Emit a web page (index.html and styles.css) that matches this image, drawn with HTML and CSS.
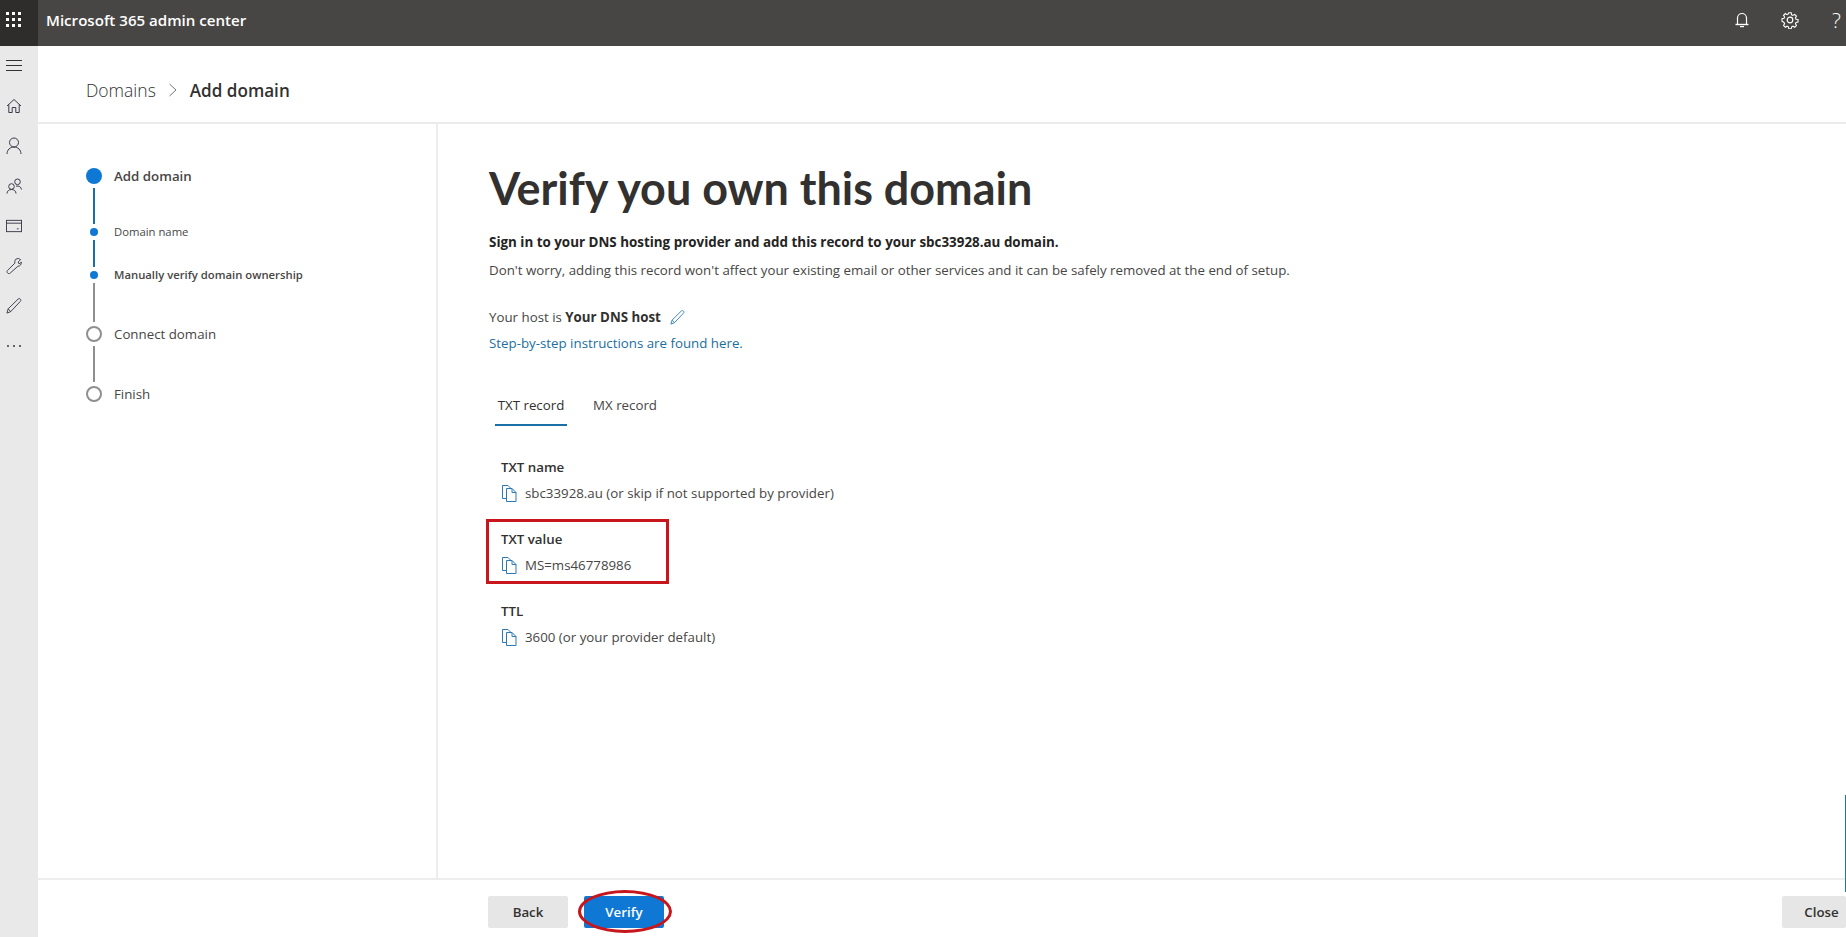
FILE: index.html
```html
<!DOCTYPE html>
<html lang="en">
<head>
<meta charset="utf-8">
<title>Microsoft 365 admin center</title>
<link rel="stylesheet" href="styles.css">
</head>
<body>
<header class="topbar">
  <div class="waffle">
    <svg width="15" height="15" viewBox="0 0 15 15" fill="#fff"><rect x="0" y="0" width="3" height="3"/><rect x="6" y="0" width="3" height="3"/><rect x="12" y="0" width="3" height="3"/><rect x="0" y="6" width="3" height="3"/><rect x="6" y="6" width="3" height="3"/><rect x="12" y="6" width="3" height="3"/><rect x="0" y="12" width="3" height="3"/><rect x="6" y="12" width="3" height="3"/><rect x="12" y="12" width="3" height="3"/></svg>
  </div>
  <div class="app-name">Microsoft 365 admin center</div>
  <div class="top-actions">
    <svg class="top-bell" width="14" height="16" viewBox="0 0 14 16" fill="none" stroke="#fff" stroke-width="1.2"><path d="M2.5 12.5V6a4.5 4.5 0 0 1 9 0v6.500"/><path d="M.5 12.500h13" stroke-width="1.400"/><path d="M5 14.600h4"/></svg>
    <svg class="top-gear" width="18" height="18" viewBox="0 0 18 18" fill="none" stroke="#fff" stroke-width="1.200"><path d="M7.600 1h2.800l.4 2.200 1.500.7 1.900-1.200 2 2-1.200 1.900.7 1.500 2.200.4v2.800l-2.200.4-.7 1.500 1.200 1.900-2 2-1.900-1.200-1.500.7-.4 2.200H7.600l-.4-2.200-1.500-.7-1.900 1.200-2-2 1.200-1.900-.7-1.500L.1 10.400V7.600l2.200-.4.7-1.500-1.200-1.900 2-2 1.900 1.200 1.500-.7z" transform="translate(.9 .9) scale(.9)"/><circle cx="9" cy="9" r="2.800"/></svg>
    <span class="top-help">?</span>
  </div>
</header>
<div class="shell">
  <nav class="rail">
    <svg class="rail-icon" width="16" height="18" viewBox="0 0 16 18" fill="none" stroke="#333" stroke-width="1"><path d="M0 3.500h16M0 8.500h16M0 13.500h16"/></svg>
    <svg class="rail-icon" width="16" height="18" viewBox="0 0 16 16" fill="none" stroke="#3c3a4a" stroke-width="1"><path d="M1 8 8 1.500 15 8"/><path d="M2.800 6.500V14.500H6.200V9.500H9.800V14.500H13.200V6.500"/></svg>
    <svg class="rail-icon" width="16" height="18" viewBox="0 0 16 18" fill="none" stroke="#3c3a4a" stroke-width="1"><circle cx="8" cy="5.500" r="4.500"/><path d="M1 17c0-4 3-7 7-7s7 3 7 7"/></svg>
    <svg class="rail-icon" width="16" height="18" viewBox="0 0 16 16" fill="none" stroke="#3c3a4a" stroke-width="1"><circle cx="5.500" cy="8.500" r="2.800"/><path d="M1 15.500c0-2.500 2-4 4.500-4s4.500 1.500 4.500 4"/><circle cx="11.500" cy="3.800" r="2.800"/><path d="M10 8.200c2.800-.8 5.200.8 5.500 3.300"/></svg>
    <svg class="rail-icon" width="16" height="18" viewBox="0 0 17 13" fill="none" stroke="#3c3a4a" stroke-width="1"><rect x=".5" y=".5" width="16" height="12"/><path d="M.5 3.500h16M11.500 9.500h2"/></svg>
    <svg class="rail-icon" width="16" height="18" viewBox="0 0 17 17" fill="none" stroke="#3c3a4a" stroke-width="1"><path d="M10.500 1.200a4 4 0 0 1 5 .5L13 4.200l.3 1.500 1.500.3 1.400-1.800c.6 2.400-1.200 4.500-3.600 4.600L4.500 16a2 2 0 0 1-3.200-.6c-.5-.8-.2-1.700.4-2.300L9.400 5.500c-.2-1.800 0-3.300 1.100-4.300z"/></svg>
    <svg class="rail-icon" width="16" height="18" viewBox="0 0 17 17" fill="none" stroke="#3c3a4a" stroke-width="1"><path d="M1 16 2.300 11.500 12.800 1.200a1.600 1.600 0 0 1 2.400 0c.8.800.7 1.700 0 2.400L5 14.500z"/><path d="M2.300 11.500 5 14.500"/></svg>
    <span class="rail-more"><i></i><i></i><i></i></span>
  </nav>
  <div class="main">
    <div class="crumbs">
      <span class="crumb-parent">Domains</span>
      <svg class="crumb-sep" width="10" height="14" viewBox="0 0 10 14" fill="none" stroke="#777" stroke-width="1"><path d="M1.500 1 8 7l-6.500 6"/></svg>
      <span class="crumb-current">Add domain</span>
    </div>
    <div class="workspace">
      <aside class="steps">
        <div class="step step-major"><span class="node node-done"></span><span class="step-label step-label-on">Add domain</span></div>
        <div class="link link-blue link-a"></div>
        <div class="step step-sub"><span class="node node-dot"></span><span class="step-label-small">Domain name</span></div>
        <div class="link link-blue link-b"></div>
        <div class="step step-sub"><span class="node node-dot"></span><span class="step-label-small step-label-strong">Manually verify domain ownership</span></div>
        <div class="link link-grey link-c"></div>
        <div class="step step-major"><span class="node node-open"></span><span class="step-label">Connect domain</span></div>
        <div class="link link-grey link-d"></div>
        <div class="step step-major"><span class="node node-open"></span><span class="step-label">Finish</span></div>
      </aside>
      <section class="detail">
        <h1 class="title">Verify you own this domain</h1>
        <p class="lead">Sign in to your DNS hosting provider and add this record to your sbc33928.au domain.</p>
        <p class="note">Don't worry, adding this record won't affect your existing email or other services and it can be safely removed at the end of setup.</p>
        <p class="host">Your host is <strong>Your DNS host</strong>
          <svg class="host-edit" width="15" height="15" viewBox="0 0 17 17" fill="none" stroke="#2a7ab5" stroke-width="1"><path d="M1 16 2.300 11.500 12.800 1.200a1.600 1.600 0 0 1 2.400 0c.8.800.7 1.700 0 2.400L5 14.500z"/><path d="M2.300 11.500 5 14.500"/></svg>
        </p>
        <a class="guide" href="#">Step-by-step instructions are found here.</a>
        <div class="tabs">
          <span class="tab tab-active">TXT record</span>
          <span class="tab">MX record</span>
        </div>
        <div class="records">
          <div class="record">
            <div class="record-name">TXT name</div>
            <div class="record-value"><svg class="copy" width="15" height="17" viewBox="0 0 15 17" fill="none" stroke="#2a7ab5" stroke-width="1"><path d="M5 13.500H.5V.5H6L9 3.500"/><path d="M4.500 3.500h5.500l4 4v9h-9.500z"/><path d="M10 3.500v4h4"/></svg>sbc33928.au (or skip if not supported by provider)</div>
          </div>
          <div class="record">
            <div class="record-name">TXT value</div>
            <div class="record-value"><svg class="copy" width="15" height="17" viewBox="0 0 15 17" fill="none" stroke="#2a7ab5" stroke-width="1"><path d="M5 13.500H.5V.5H6L9 3.500"/><path d="M4.500 3.500h5.500l4 4v9h-9.500z"/><path d="M10 3.500v4h4"/></svg>MS=ms46778986</div>
            <span class="mark-box"></span>
          </div>
          <div class="record">
            <div class="record-name">TTL</div>
            <div class="record-value"><svg class="copy" width="15" height="17" viewBox="0 0 15 17" fill="none" stroke="#2a7ab5" stroke-width="1"><path d="M5 13.500H.5V.5H6L9 3.500"/><path d="M4.500 3.500h5.500l4 4v9h-9.500z"/><path d="M10 3.500v4h4"/></svg>3600 (or your provider default)</div>
          </div>
        </div>
      </section>
    </div>
    <footer class="footer">
      <button class="btn btn-back">Back</button>
      <span class="verify-wrap"><button class="btn btn-verify">Verify</button><span class="mark-ellipse"></span></span>
      <button class="btn btn-close">Close</button>
    </footer>
    <span class="edge-line"></span>
  </div>
</div>
</body>
</html>
```

FILE: styles.css
```css
* { box-sizing: border-box; }
html, body { margin: 0; height: 100%; overflow: hidden; }
body {
  font-family: "Open Sans", "Noto Sans", sans-serif;
  font-size: 13.3px;
  color: #323130;
  background: #fff;
  display: flex;
  flex-direction: column;
}
.topbar {
  height: 46px;
  flex: none;
  display: flex;
  align-items: center;
  background: #484644;
  color: #fff;
}
.waffle {
  width: 38px;
  height: 46px;
  background: #2f2d2c;
  display: flex;
  align-items: flex-start;
  padding: 12px 0 0 6px;
}
.app-name { margin: 0 0 6px 8px; font-size: 15.1px; font-weight: 600; }
.top-actions { margin: 0 0 6px auto; display: flex; align-items: center; }
.top-bell { margin-right: 32px; }
.top-gear { margin-right: 33px; }
.top-help { width: 14px; font-size: 21px; line-height: 24px; font-weight: 300; }

.shell { flex: 1; display: flex; min-height: 0; }
.rail {
  width: 38px;
  flex: none;
  background: #e9e9e9;
  display: flex;
  flex-direction: column;
  align-items: flex-start;
  padding: 11px 0 0 6px;
}
.rail-icon { margin-bottom: 22px; }
.rail-more { display: flex; gap: 4px; height: 18px; align-items: center; padding-left: 1px; }
.rail-more i { width: 2px; height: 2px; background: #666; }

.main { flex: 1; min-width: 0; display: flex; flex-direction: column; position: relative; }
.crumbs {
  height: 78px;
  flex: none;
  border-bottom: 2px solid #ebebeb;
  display: flex;
  align-items: center;
  padding: 12px 0 0 48px;
}
.crumb-parent { font-size: 17.5px; font-weight: 300; color: #323130; }
.crumb-sep { margin: 0 12px 0 12px; }
.crumb-current { font-size: 17.1px; font-weight: 600; color: #323130; }

.workspace { flex: 1; min-height: 0; display: flex; }
.steps {
  width: 400px;
  flex: none;
  border-right: 2px solid #ededed;
  padding: 44px 0 0 48px;
}
.step { display: flex; align-items: center; position: relative; }
.step-major { height: 16px; }
.step-sub { height: 8px; }
.node { flex: none; border-radius: 50%; }
.node-done { width: 16px; height: 16px; background: #0f78d4; }
.node-open { width: 16px; height: 16px; border: 2px solid #8f8f8f; background: #fff; }
.node-dot { width: 8px; height: 8px; background: #0f78d4; margin: 0 4px; }
.step-label { margin-left: 12px; font-size: 13.3px; color: #484644; line-height: 16px; }
.step-label-on { font-weight: 600; }
.step-label-small { margin-left: 12px; font-size: 11.3px; color: #484644; line-height: 14px; white-space: nowrap; }
.step-label-strong { font-weight: 600; }
.link { width: 2px; margin-left: 7px; }
.link-blue { background: #1b6ea8; }
.link-grey { background: #8f8f8f; }
.link-a { height: 36px; margin-top: 4px; margin-bottom: 4px; }
.link-b { height: 27px; margin-top: 4px; margin-bottom: 4px; }
.link-c { height: 39px; margin-top: 4px; margin-bottom: 4px; }
.link-d { height: 36px; margin-top: 4px; margin-bottom: 4px; }

.detail { flex: 1; min-width: 0; padding: 36px 0 0 51px; }
.title { margin: 0; font-family: Lato, "Open Sans", sans-serif; font-size: 44.9px; line-height: 56px; font-weight: 700; color: #323130; }
.lead { margin: 17px 0 0; font-size: 13.4px; line-height: 18px; font-weight: 700; color: #252423; }
.note { margin: 10px 0 0; line-height: 18px; color: #484644; }
.host { margin: 29px 0 0; line-height: 18px; color: #484644; display: flex; align-items: center; white-space: pre; }
.host strong { color: #323130; }
.host-edit { margin-left: 9px; }
.guide { display: block; margin-top: 8px; line-height: 18px; color: #1b6f9f; text-decoration: none; }
.tabs { margin-top: 38px; display: flex; gap: 22px; padding-left: 6px; }
.tab { height: 36px; width: 72px; line-height: 30px; text-align: center; white-space: nowrap; color: #484644; }
.tab-active { border-bottom: 2px solid #1b6ea8; color: #323130; }
.records { margin: 32px 0 0 12px; display: flex; flex-direction: column; gap: 28px; }
.record { position: relative; }
.record-name { line-height: 18px; font-weight: 600; color: #323130; }
.record-value { margin-top: 8px; line-height: 18px; display: flex; align-items: center; color: #484644; }
.copy { margin: 0 8px 0 1px; flex: none; }
.mark-box {
  position: absolute;
  left: -15px;
  top: -11px;
  width: 183px;
  height: 65px;
  border: 3px solid #c8161d;
}

.footer {
  height: 59px;
  flex: none;
  border-top: 2px solid #ededed;
  display: flex;
  align-items: center;
  padding: 7px 0 0 450px;
}
.btn {
  height: 32px;
  width: 80px;
  border: 0;
  border-radius: 2px;
  font: 600 13.3px "Open Sans", sans-serif;
  padding: 0;
}
.btn-back { background: #e6e6e6; color: #323130; }
.btn-verify { background: #0f78d4; color: #fff; }
.verify-wrap { position: relative; margin-left: 16px; display: flex; }
.mark-ellipse {
  position: absolute;
  left: -6px;
  top: -6px;
  width: 94px;
  height: 43px;
  border: 3px solid #c8161d;
  border-radius: 50%;
}
.btn-close { margin-left: auto; width: 64px; padding-left: 15px; background: #e6e6e6; color: #323130; }
.edge-line {
  position: absolute;
  right: 0;
  top: 749px;
  width: 1px;
  height: 97px;
  background: #1a7f8c;
}
```
